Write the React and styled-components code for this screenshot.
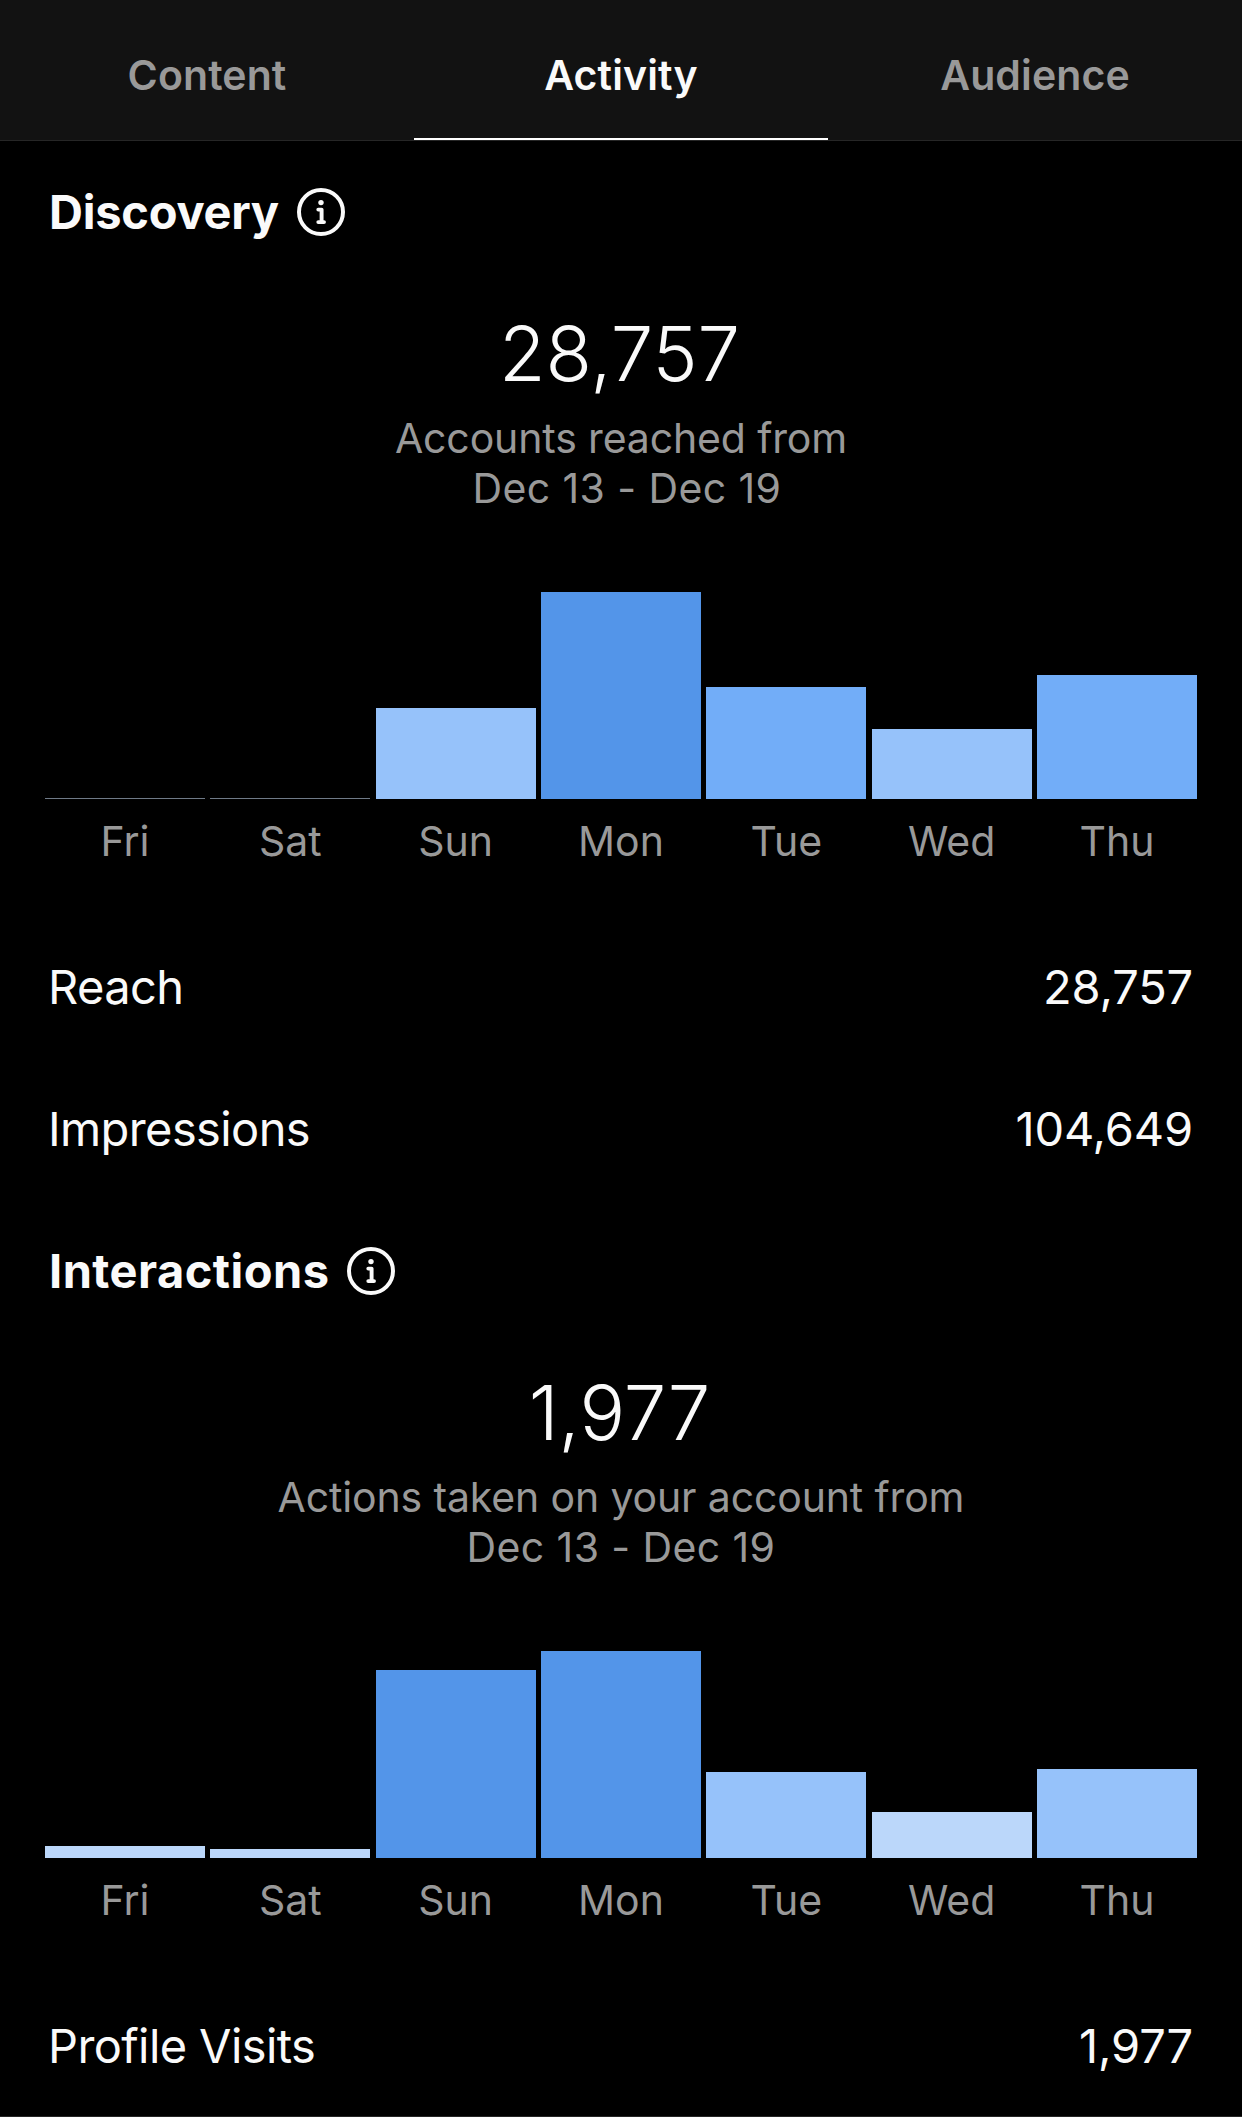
import React, { useState } from "react";
import styled, { createGlobalStyle } from "styled-components";

const GlobalStyle = createGlobalStyle`
    body {
        margin: 0;
        background: #000000;
        color: #fafafa;
        font-family: Inter, "Liberation Sans", sans-serif;
    }
`;

const Page = styled.div`
    width: 100%;
    min-width: 1242px;
    box-sizing: border-box;
    height: 2117px;
    border-bottom: 1px solid #262626;
`;

const TabBar = styled.nav`
    display: flex;
    height: 140px;
    background: #121212;
    border-bottom: 1px solid #262626;
`;

const Tab = styled.button`
    flex: 1;
    margin: 0;
    padding: 12px 0 0;
    border: none;
    border-bottom: 2px solid ${(props) => (props.$active ? "#ffffff" : "transparent")};
    background: none;
    color: ${(props) => (props.$active ? "#fafafa" : "#999999")};
    font-family: inherit;
    font-size: 41px;
    font-weight: 600;
    letter-spacing: 0.1px;
`;

const SectionHeader = styled.header`
    display: flex;
    align-items: center;
    gap: 18px;
    height: 142px;
    padding: 0 49px;
`;

const SectionTitle = styled.h2`
    margin: 0;
    font-size: 47px;
    font-weight: 700;
    line-height: 60px;
    letter-spacing: ${(props) => props.$tracking}px;
`;

const InfoIcon = styled.svg`
    width: 48px;
    height: 48px;
    fill: none;
    stroke: #fafafa;
    stroke-linecap: round;
    stroke-linejoin: round;
`;

const Summary = styled.div`
    padding-top: 25px;
    text-align: center;
`;

const Total = styled.div`
    padding-right: 3px;
    font-size: 76px;
    font-weight: 300;
    line-height: 90px;
`;

const Caption = styled.p`
    margin: 15px 0 0;
    color: #999999;
    font-size: 41px;
    line-height: 50px;
    letter-spacing: -0.14px;
`;

const Period = styled.span`
    display: block;
    white-space: pre;
    letter-spacing: 0.4px;
`;

const Chart = styled.div`
    display: grid;
    grid-template-columns: repeat(7, 1fr);
    column-gap: 5.5px;
    padding: 79px 45px 50px;
`;

const Day = styled.div`
    display: flex;
    flex-direction: column;
    align-items: center;
`;

const BarArea = styled.div`
    display: flex;
    align-items: flex-end;
    width: 100%;
    height: 207px;
`;

const Bar = styled.div`
    width: 100%;
    background: ${(props) => props.$color};
`;

const DayLabel = styled.span`
    margin-top: 17px;
    color: #999999;
    font-size: 41px;
    line-height: 50px;
`;

const StatRow = styled.div`
    display: flex;
    align-items: center;
    justify-content: space-between;
    height: 142px;
    padding: 0 49px 0 48px;
    font-size: 47px;
    line-height: 60px;
`;

const StatLabel = styled.span`
    letter-spacing: -0.6px;
`;

const StatValue = styled.span`
    letter-spacing: -0.15px;
`;

const colors = {
    empty: "#6f7a87",
    lightest: "#bbd7fa",
    light: "#96c2fa",
    medium: "#72adf8",
    dark: "#5395e9",
};

const tabs = ["Content", "Activity", "Audience"];

const sections = [
    {
        title: "Discovery",
        tracking: -0.25,
        total: "28,757",
        caption: "Accounts reached from",
        period: " Dec 13 - Dec 19",
        days: [
            { day: "Fri", height: 1, color: colors.empty },
            { day: "Sat", height: 1, color: colors.empty },
            { day: "Sun", height: 91, color: colors.light },
            { day: "Mon", height: 207, color: colors.dark },
            { day: "Tue", height: 112.5, color: colors.medium },
            { day: "Wed", height: 70, color: colors.light },
            { day: "Thu", height: 124, color: colors.medium },
        ],
        stats: [
            { label: "Reach", value: "28,757" },
            { label: "Impressions", value: "104,649" },
        ],
    },
    {
        title: "Interactions",
        tracking: 0.45,
        total: "1,977",
        caption: "Actions taken on your account from",
        period: "Dec 13 - Dec 19",
        days: [
            { day: "Fri", height: 12, color: colors.lightest },
            { day: "Sat", height: 9.5, color: colors.lightest },
            { day: "Sun", height: 188, color: colors.dark },
            { day: "Mon", height: 207, color: colors.dark },
            { day: "Tue", height: 86, color: colors.light },
            { day: "Wed", height: 46, color: colors.lightest },
            { day: "Thu", height: 89.5, color: colors.light },
        ],
        stats: [
            { label: "Profile Visits", value: "1,977" },
        ],
    },
];

const Info = () => (
    <InfoIcon viewBox="0 0 48 48">
        <circle cx="24" cy="24" r="22" strokeWidth="4" />
        <circle cx="24" cy="14.6" r="2.7" fill="#fafafa" stroke="none" />
        <path d="M21.3 21.6h3.3v12.5M21.3 34.1h5.7" strokeWidth="3.9" />
    </InfoIcon>
);

const Section = (props) => {
    const { title, tracking, total, caption, period, days, stats } = props.section;

    return (
        <section>
            <SectionHeader>
                <SectionTitle $tracking={tracking}>{title}</SectionTitle>
                <Info />
            </SectionHeader>
            <Summary>
                <Total>{total}</Total>
                <Caption>
                    {caption}
                    <Period>{period}</Period>
                </Caption>
            </Summary>
            <Chart>
                {days.map(({ day, height, color }) => (
                    <Day key={day}>
                        <BarArea>
                            <Bar $color={color} style={{ height }} />
                        </BarArea>
                        <DayLabel>{day}</DayLabel>
                    </Day>
                ))}
            </Chart>
            {stats.map(({ label, value }) => (
                <StatRow key={label}>
                    <StatLabel>{label}</StatLabel>
                    <StatValue>{value}</StatValue>
                </StatRow>
            ))}
        </section>
    );
};

const App = () => {
    const [activeTab, setActiveTab] = useState("Activity");

    return (
        <Page>
            <GlobalStyle />
            <TabBar>
                {tabs.map((tab) => (
                    <Tab key={tab} $active={tab === activeTab} onClick={() => setActiveTab(tab)}>
                        {tab}
                    </Tab>
                ))}
            </TabBar>
            {sections.map((section) => (
                <Section key={section.title} section={section} />
            ))}
        </Page>
    );
};

export default App;
